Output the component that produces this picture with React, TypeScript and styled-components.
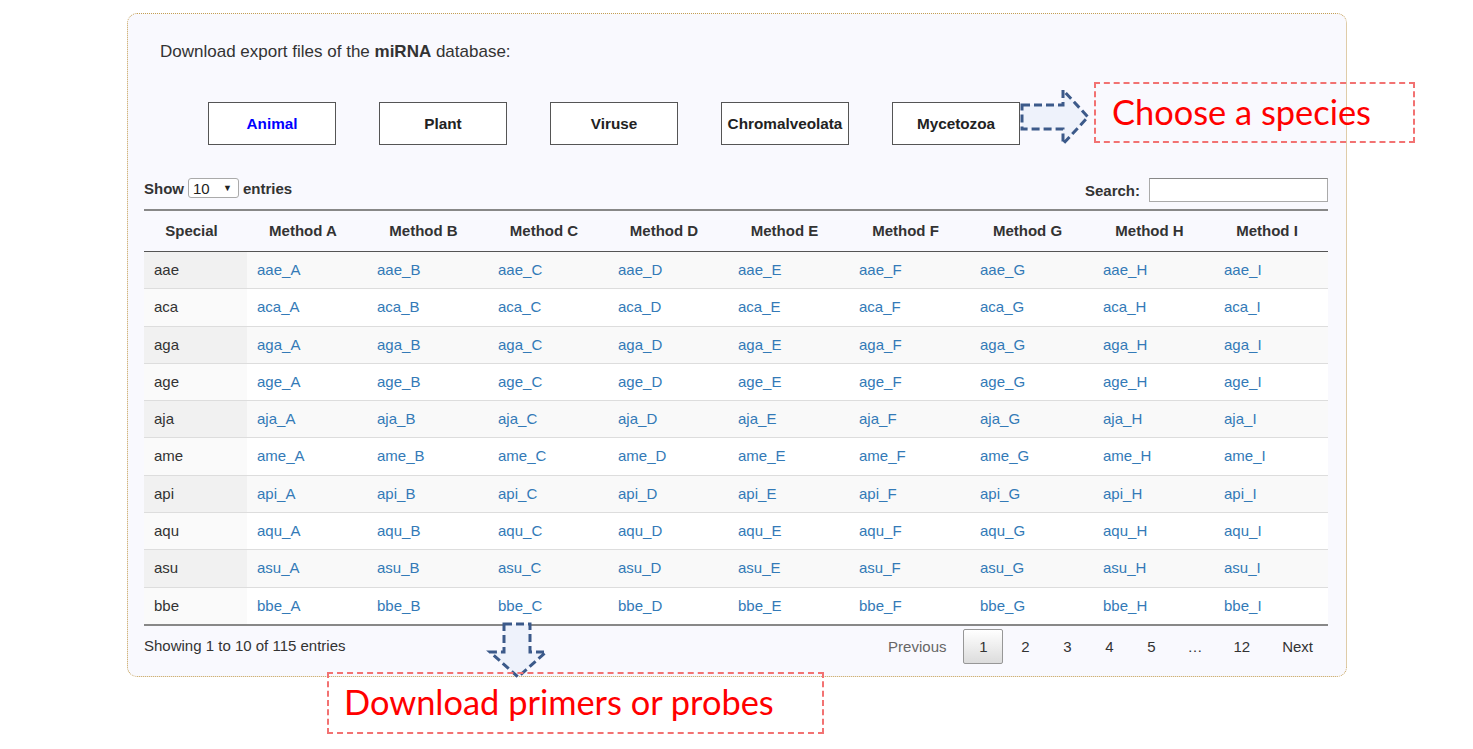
import React from "react";
import styled, { createGlobalStyle } from "styled-components";

const GlobalStyle = createGlobalStyle`
  html, body { margin: 0; padding: 0; background: #ffffff; }
  body { font-family: "Liberation Sans", Arial, sans-serif; color: #333; }
  * { box-sizing: border-box; }
`;

const Page = styled.div`
  position: relative;
  width: 1473px;
  height: 749px;
  overflow: hidden;
  background: #ffffff;
  padding: 13px 0 0 127px;
`;

const Panel = styled.div`
  width: 1220px;
  height: 664px;
  border: 1px dotted #c59f52;
  border-radius: 10px;
  background: #f9f9fe;
  padding: 0 18px 0 16px;
  display: flex;
  flex-direction: column;
`;

const Title = styled.div`
  margin: 29px 0 0 16px;
  font-size: 17px;
  line-height: 18px;
  color: #333;
  b { font-weight: bold; }
`;

const ButtonRow = styled.div`
  display: flex;
  gap: 43px;
  margin-top: 41px;
  padding-left: 64px;
`;

const SpeciesButton = styled.button<{ $active?: boolean }>`
  width: 128px;
  height: 43px;
  border: 1px solid #555;
  background: #ffffff;
  font-family: "Liberation Sans", Arial, sans-serif;
  font-weight: bold;
  font-size: 15.3px;
  color: ${(p) => (p.$active ? "#0000ff" : "#222")};
  padding: 0;
  cursor: pointer;
`;

const Controls = styled.div`
  display: flex;
  justify-content: space-between;
  align-items: flex-start;
  margin-top: 33px;
  font-size: 15px;
  font-weight: bold;
  color: #333;
`;

const LengthControl = styled.div`
  display: flex;
  align-items: center;
  gap: 4px;
  height: 20px;
`;

const FakeSelect = styled.div`
  width: 51px;
  height: 20px;
  border: 1px solid #aaa;
  border-radius: 3px;
  background: #fff;
  display: flex;
  align-items: center;
  justify-content: space-between;
  padding: 0 6px 0 4px;
  font-weight: normal;
  font-size: 15px;
  color: #222;
  span { font-size: 9px; }
`;

const SearchControl = styled.label`
  display: flex;
  align-items: center;
  gap: 9px;
  height: 24px;
`;

const SearchInput = styled.input`
  width: 179px;
  height: 24px;
  border: 1px solid #aaa;
  border-top-color: #888;
  background: #fff;
  padding: 0 4px;
  font-size: 14px;
`;

const Table = styled.table`
  margin-top: 7px;
  width: 1184px;
  table-layout: fixed;
  border-collapse: collapse;
  border-top: 2px solid #888;
  border-bottom: 2px solid #888;
  font-size: 15px;

  tbody tr + tr td {
    border-top: 1px solid #ddd;
  }
`;

const HeadCell = styled.th`
  padding: 10px 18px 10px 10px;
  line-height: 20px;
  font-weight: bold;
  text-align: center;
  color: #333;
  border-bottom: 1px solid #555;
`;

const Row = styled.tr<{ $odd: boolean }>`
  background: ${(p) => (p.$odd ? "#f9f9f9" : "#ffffff")};
`;

const Cell = styled.td<{ $sorted?: boolean; $odd?: boolean }>`
  padding: 8px 10px;
  line-height: 20.3px;
  color: #333;
  background: ${(p) => (p.$sorted ? (p.$odd ? "#f1f1f1" : "#fafafa") : "transparent")};
`;

const Link = styled.a`
  color: #337ab7;
  text-decoration: none;
`;

const Footer = styled.div`
  display: flex;
  justify-content: space-between;
  align-items: center;
  padding-top: 3px;
  font-size: 15px;
  color: #333;
`;

const Info = styled.div`
  line-height: 20px;
`;

const Pager = styled.div`
  display: flex;
  align-items: center;
  gap: 2px;
`;

const PageButton = styled.a<{ $current?: boolean; $disabled?: boolean }>`
  min-width: 40px;
  height: 35px;
  padding: 7px 14px;
  line-height: 19px;
  text-align: center;
  border: 1px solid ${(p) => (p.$current ? "#979797" : "transparent")};
  border-radius: 2px;
  color: ${(p) => (p.$disabled ? "#666" : "#333")};
  background: ${(p) =>
    p.$current ? "linear-gradient(to bottom, #ffffff 0%, #dcdcdc 100%)" : "transparent"};
  cursor: pointer;
`;

const Ellipsis = styled.span`
  padding: 0 14px;
  line-height: 19px;
  color: #333;
`;

const Callout = styled.div<{ $left: number; $top: number; $w: number; $h: number; $pad: number }>`
  position: absolute;
  left: ${(p) => p.$left}px;
  top: ${(p) => p.$top}px;
  width: ${(p) => p.$w}px;
  height: ${(p) => p.$h}px;
  border: 2px dashed #f27272;
  display: flex;
  align-items: center;
  padding-left: ${(p) => p.$pad}px;
  padding-bottom: 3px;
  font-family: Lato, "Open Sans", sans-serif;
  font-size: 34.4px;
  color: #ff0000;
  white-space: nowrap;
`;

const ArrowSvg = styled.svg<{ $left: number; $top: number }>`
  position: absolute;
  left: ${(p) => p.$left}px;
  top: ${(p) => p.$top}px;
  overflow: visible;
`;

const species = ["aae", "aca", "aga", "age", "aja", "ame", "api", "aqu", "asu", "bbe"];
const methods = ["A", "B", "C", "D", "E", "F", "G", "H", "I"];
const colWidths = [103, 120, 121, 120, 120, 121, 121, 123, 121, 114];
const groups = ["Animal", "Plant", "Viruse", "Chromalveolata", "Mycetozoa"];

export default function App() {
  return (
    <Page>
      <GlobalStyle />
      <Panel>
        <Title>
          Download export files of the <b>miRNA</b> database:
        </Title>
        <ButtonRow>
          {groups.map((g, i) => (
            <SpeciesButton key={g} $active={i === 0}>
              {g}
            </SpeciesButton>
          ))}
        </ButtonRow>
        <Controls>
          <LengthControl>
            Show
            <FakeSelect>
              10<span>▼</span>
            </FakeSelect>
            entries
          </LengthControl>
          <SearchControl>
            Search:
            <SearchInput type="search" />
          </SearchControl>
        </Controls>
        <Table>
          <colgroup>
            {colWidths.map((w, i) => (
              <col key={i} style={{ width: w }} />
            ))}
          </colgroup>
          <thead>
            <tr>
              <HeadCell>Special</HeadCell>
              {methods.map((m) => (
                <HeadCell key={m}>Method {m}</HeadCell>
              ))}
            </tr>
          </thead>
          <tbody>
            {species.map((s, i) => {
              const odd = i % 2 === 0;
              return (
                <Row key={s} $odd={odd}>
                  <Cell $sorted $odd={odd}>
                    {s}
                  </Cell>
                  {methods.map((m) => (
                    <Cell key={m}>
                      <Link href="#">
                        {s}_{m}
                      </Link>
                    </Cell>
                  ))}
                </Row>
              );
            })}
          </tbody>
        </Table>
        <Footer>
          <Info>Showing 1 to 10 of 115 entries</Info>
          <Pager>
            <PageButton $disabled>Previous</PageButton>
            <PageButton $current>1</PageButton>
            <PageButton>2</PageButton>
            <PageButton>3</PageButton>
            <PageButton>4</PageButton>
            <PageButton>5</PageButton>
            <Ellipsis>…</Ellipsis>
            <PageButton>12</PageButton>
            <PageButton>Next</PageButton>
          </Pager>
        </Footer>
      </Panel>

      <ArrowSvg $left={1020} $top={88} width="72" height="62" viewBox="0 0 72 62">
        <path
          d="M2 17 H43 V2 L68 29 L43 56 V41 H2 Z"
          fill="#eef2fb"
          stroke="#3c5a8a"
          strokeWidth="3"
          strokeDasharray="8 4"
          strokeLinejoin="miter"
        />
      </ArrowSvg>
      <Callout $left={1094} $top={82} $w={321} $h={61} $pad={16}>
        Choose a species
      </Callout>

      <ArrowSvg $left={488} $top={622} width="60" height="58" viewBox="0 0 60 58">
        <path
          d="M16 2 H42 V30 H58 L30 55 L2 30 H16 Z"
          fill="#eef2fb"
          stroke="#3c5a8a"
          strokeWidth="3"
          strokeDasharray="8 4"
          strokeLinejoin="miter"
        />
      </ArrowSvg>
      <Callout $left={327} $top={672} $w={497} $h={62} $pad={15}>
        Download primers or probes
      </Callout>
    </Page>
  );
}
